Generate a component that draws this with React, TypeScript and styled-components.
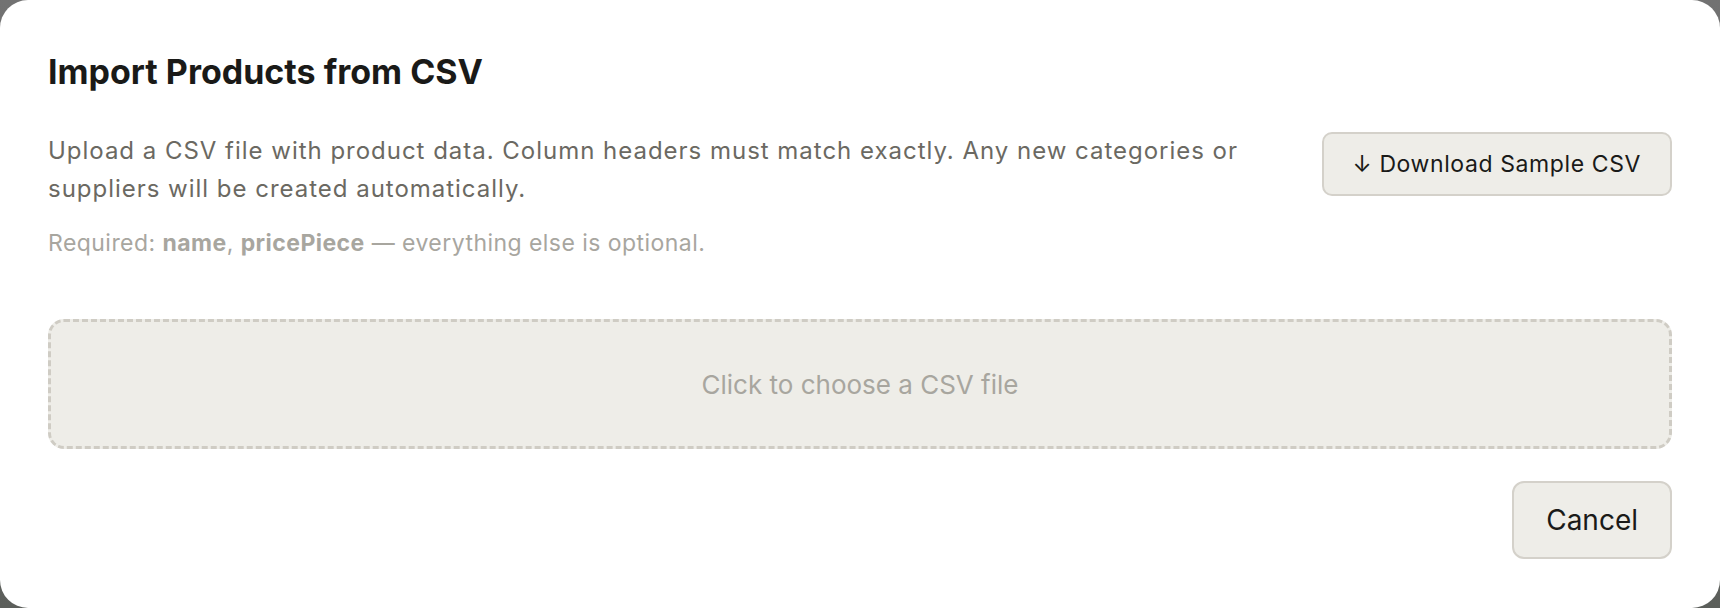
import React from 'react'
import styled, { createGlobalStyle } from 'styled-components'

const GlobalStyle = createGlobalStyle`
  html, body {
    margin: 0;
    padding: 0;
    background: linear-gradient(180deg, #727272 0%, #5c5f5b 100%);
    font-family: Inter, "Noto Sans", "Liberation Sans", sans-serif;
  }
  * { box-sizing: border-box; }
`

export default function App() {
    return <>
        <GlobalStyle />
        <Modal>
            <Title>Import Products from CSV</Title>
            <IntroRow>
                <Intro>
                    <Description>
                        Upload a CSV file with product data. Column headers must match exactly. Any new categories or suppliers will be created automatically.
                    </Description>
                    <Hint>
                        Required: <b>name</b>, <b>pricePiece</b> — everything else is optional.
                    </Hint>
                </Intro>
                <Button size="md">↓ Download Sample CSV</Button>
            </IntroRow>
            <DropZone>Click to choose a CSV file</DropZone>
            <Footer>
                <Button size="lg">Cancel</Button>
            </Footer>
        </Modal>
    </>
}

const Modal = styled.div`
    height: 608px;
    background: #ffffff;
    border-radius: 28px;
    padding: 48px 48px 0;
    display: flex;
    flex-direction: column;
`
const Title = styled.h1`
    margin: 5px 0 0;
    font-size: 34px;
    line-height: 38px;
    font-weight: 700;
    color: #1a1a18;
    letter-spacing: 0;
`
const IntroRow = styled.div`
    display: flex;
    align-items: flex-start;
    justify-content: space-between;
    gap: 32px;
    margin-top: 41px;
`
const Intro = styled.div`
    flex: 1;
`
const Description = styled.p`
    margin: 0;
    font-size: 24px;
    line-height: 38px;
    letter-spacing: 0.98px;
    color: #6b6962;
`
const Hint = styled.p`
    margin: 20px 0 0;
    font-size: 23px;
    line-height: 30px;
    letter-spacing: 0.45px;
    color: #a8a69f;
    b { font-weight: 700; }
`
const Button = styled.button<{ size: 'md' | 'lg' }>`
    flex-shrink: 0;
    font-family: inherit;
    background: #eeede8;
    border: 2px solid #d4d1ca;
    color: #1a1a18;
    cursor: pointer;
    font-size: ${p => p.size === 'lg' ? '28px' : '23px'};
    letter-spacing: ${p => p.size === 'lg' ? '0' : '0.6px'};
    height: ${p => p.size === 'lg' ? '78px' : '64px'};
    padding: ${p => p.size === 'lg' ? '0 32px' : '0 29px'};
    border-radius: ${p => p.size === 'lg' ? '12px' : '10px'};
`
const DropZone = styled.div`
    margin-top: 61px;
    height: 130px;
    background: #eeede8;
    border: 3px dashed #cfccc4;
    border-radius: 16px;
    display: flex;
    align-items: center;
    justify-content: center;
    font-size: 26px;
    color: #a8a69f;
    cursor: pointer;
`
const Footer = styled.div`
    display: flex;
    justify-content: flex-end;
    margin-top: 32px;
`
